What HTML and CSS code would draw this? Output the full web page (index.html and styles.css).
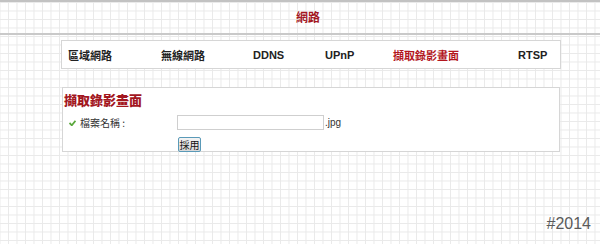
FILE: index.html
```html
<!DOCTYPE html>
<html lang="zh-Hant">
<head>
    <meta charset="UTF-8">
    <meta name="viewport" content="width=device-width, initial-scale=1.0">
    <title>網路</title>
    <link rel="stylesheet" href="styles.css">
</head>
<body>
    <div class="header">
        <h1>網路</h1>
    </div>

    <ul class="tabs">
        <li class="lan">區域網路</li>
        <li class="wlan">無線網路</li>
        <li class="ddns">DDNS</li>
        <li class="upnp">UPnP</li>
        <li class="snap active">擷取錄影畫面</li>
        <li>RTSP</li>
    </ul>

    <div class="panel">
        <h2>擷取錄影畫面</h2>
        <div class="row">
            <span class="label">
                <svg class="check" width="7" height="6" viewBox="0 0 7 6">
                    <path d="M0.5 3 L2.8 5.3 L6.5 0.8" fill="none" stroke="#5aa83c" stroke-width="1.8"/>
                </svg>
                檔案名稱 :
            </span>
            <input type="text" class="filename">
            <span class="ext">.jpg</span>
        </div>
        <div class="actions">
            <button class="apply">採用</button>
        </div>
    </div>

    <div class="footer">#2014</div>
</body>
</html>
```

FILE: styles.css
```css
body {
    margin: 0;
    height: 244px;
    font-family: "Liberation Sans", "Noto Sans CJK TC", sans-serif;
    background-color: #ffffff;
    background-image:
        linear-gradient(to right, #e9e9e9 1px, transparent 1px),
        linear-gradient(to bottom, #e9e9e9 1px, transparent 1px);
    background-size: 8.5px 8.5px;
    background-position: 8px 2px;
    position: relative;
    overflow: hidden;
}

.header {
    height: 31px;
    border-top: 2px solid #c2c2c2;
    border-bottom: 2px solid #c9c9c9;
    padding-left: 16px;
    text-align: center;
}

.header h1 {
    margin: 0;
    padding-top: 8px;
    font-size: 12px;
    line-height: 14px;
    color: #a3171f; /* title red */
    font-family: "Noto Sans CJK TC", sans-serif;
    font-weight: bold;
}

.tabs {
    list-style: none;
    margin: 5px 0 0 61px;
    padding: 0 0 0 6px;
    width: 492px;
    height: 27px;
    border: 1px solid #d6d6d6;
    background: #ffffff;
    display: flex;
    align-items: center;
}

.tabs li {
    font-size: 11px;
    font-weight: bold;
    color: #222;
    font-family: "Liberation Sans", "Noto Sans CJK TC", sans-serif;
}

.tabs .lan { width: 93px; }
.tabs .wlan { width: 92px; }
.tabs .ddns { width: 72px; }
.tabs .upnp { width: 68px; }
.tabs .snap { width: 125px; }

.tabs li.active {
    color: #b3161e;
}

.panel {
    margin: 18px 0 0 62px;
    width: 496px;
    height: 63px;
    border: 1px solid #d6d6d6;
    background: #ffffff;
}

.panel h2 {
    margin: 4px 0 0 1px;
    font-size: 13px;
    line-height: 16px;
    color: #a3171f;
    font-family: "Noto Sans CJK TC", serif;
    font-weight: 900;
}

.row {
    display: flex;
    align-items: center;
    margin-top: 7px;
    height: 15px;
}

.label {
    width: 108px;
    padding-left: 6px;
    font-size: 10px;
    color: #333;
    font-family: "Noto Sans CJK TC", sans-serif;
    display: flex;
    align-items: center;
}

.check {
    margin-right: 4px;
}

.filename {
    width: 145px;
    height: 13px;
    padding: 0;
    margin: 0;
    border: 1px solid #cfcfcf;
    background: #fff;
}

.ext {
    margin-left: 1px;
    font-size: 10px;
    color: #333;
}

.actions {
    margin: 5px 0 0 115px;
}

.apply {
    width: 23px;
    height: 15px;
    padding: 0;
    font-size: 10px;
    line-height: 11px;
    font-family: "Noto Sans CJK TC", sans-serif;
    color: #111;
    background: linear-gradient(#f4f4f4, #d8d8d8);
    border: 1px solid #5a9ab8;
    border-radius: 2px;
}

.footer {
    position: absolute;
    right: 9px;
    top: 215px;
    font-size: 16px;
    color: #5a5a5a;
    font-family: "Liberation Sans", sans-serif;
}
```
